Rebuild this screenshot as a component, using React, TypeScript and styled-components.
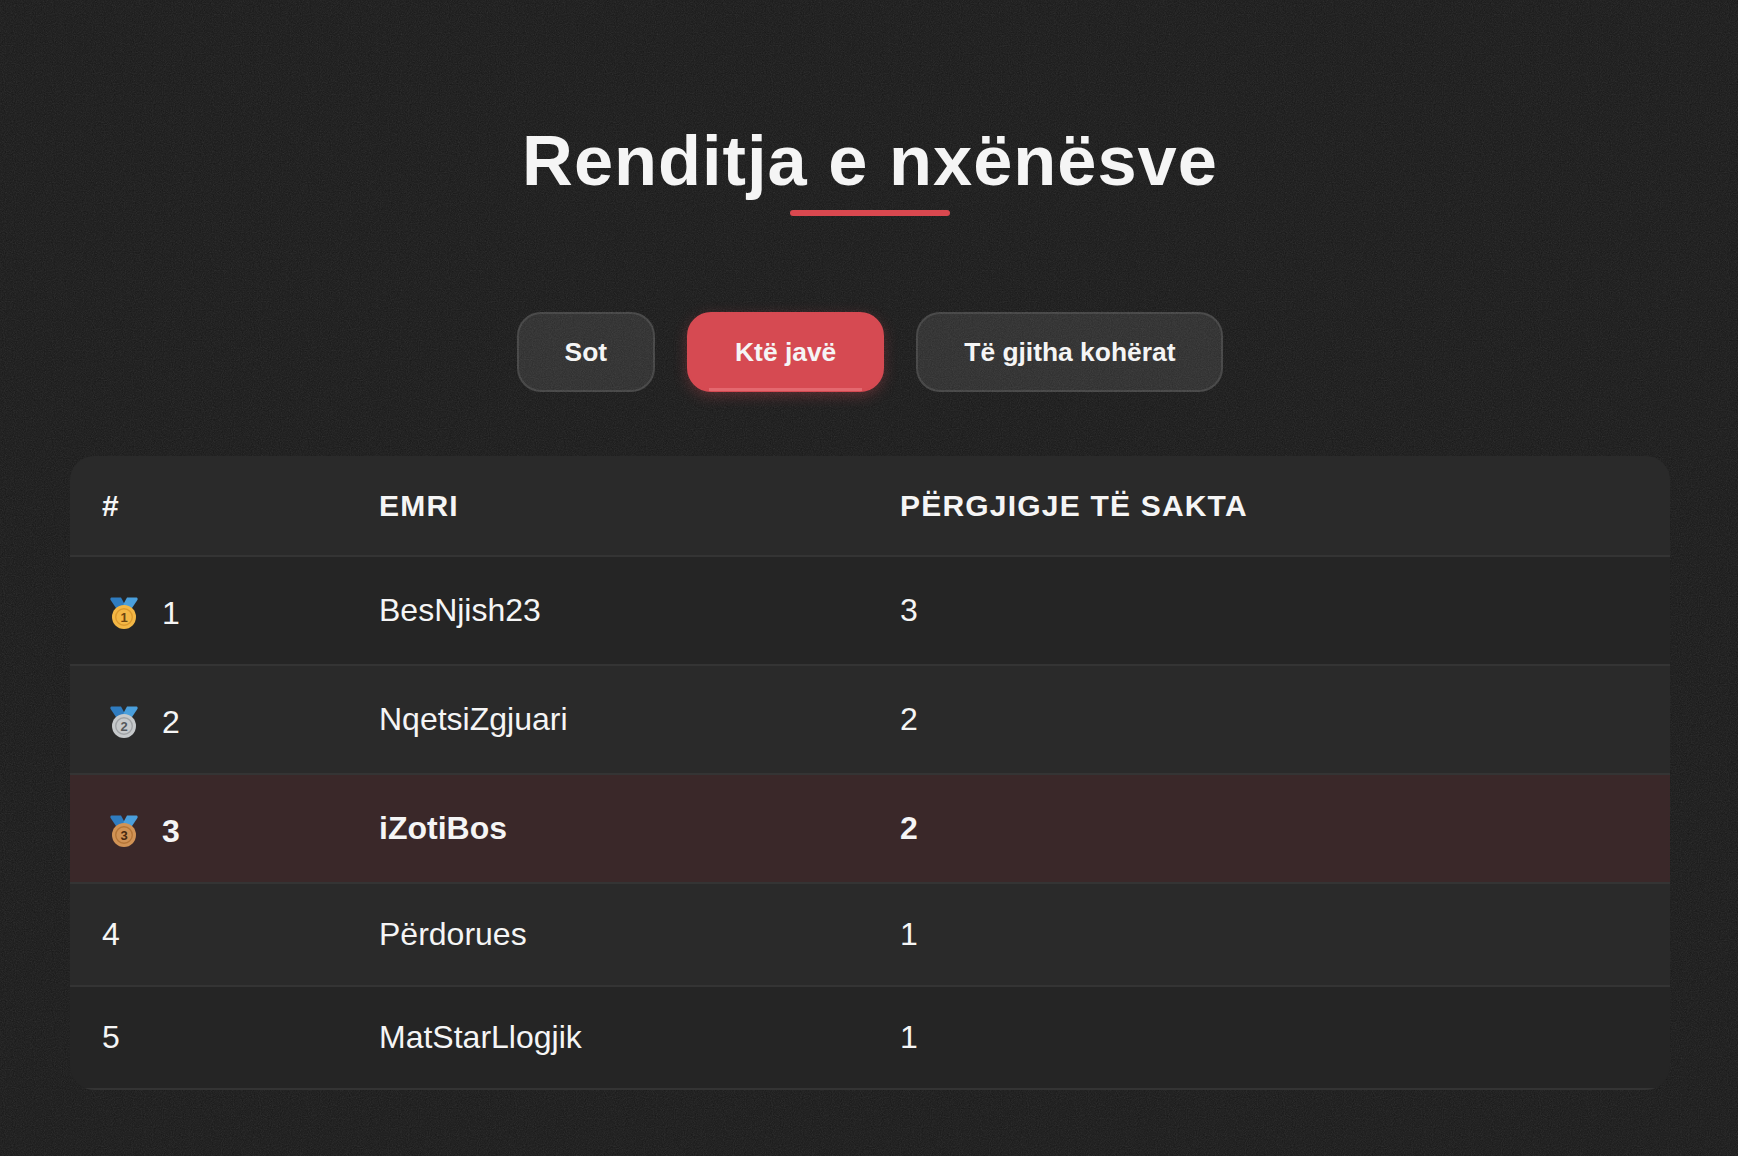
import styled, { createGlobalStyle } from 'styled-components';

const noise = `url("data:image/svg+xml,%3Csvg xmlns='http://www.w3.org/2000/svg' width='256' height='256'%3E%3Cfilter id='n'%3E%3CfeTurbulence type='fractalNoise' baseFrequency='0.9' numOctaves='4' stitchTiles='stitch'/%3E%3CfeColorMatrix type='saturate' values='0'/%3E%3C/filter%3E%3Crect width='256' height='256' filter='url(%23n)' opacity='0.14'/%3E%3C/svg%3E")`;

const GlobalStyle = createGlobalStyle`
  html, body {
    margin: 0;
    padding: 0;
  }

  body {
    background-color: #171717;
    background-image: ${noise};
    color: #f5f5f5;
    font-family: 'Liberation Sans', Arial, sans-serif;
  }
`;

type Period = { label: string; active?: boolean };

type Player = {
  rank: number;
  name: string;
  score: number;
  current?: boolean;
};

const periods: Period[] = [
  { label: 'Sot' },
  { label: 'Ktë javë', active: true },
  { label: 'Të gjitha kohërat' },
];

const players: Player[] = [
  { rank: 1, name: 'BesNjish23', score: 3 },
  { rank: 2, name: 'NqetsiZgjuari', score: 2 },
  { rank: 3, name: 'iZotiBos', score: 2, current: true },
  { rank: 4, name: 'Përdorues', score: 1 },
  { rank: 5, name: 'MatStarLlogjik', score: 1 },
];

const medalColors: Record<number, { disc: string; ring: string; digit: string }> = {
  1: { disc: '#f3b745', ring: '#dc9a2e', digit: '#6d4510' },
  2: { disc: '#c6c9cb', ring: '#a0a3a6', digit: '#55585b' },
  3: { disc: '#d19355', ring: '#b57638', digit: '#47290f' },
};

function Medal({ rank }: { rank: number }) {
  const c = medalColors[rank];
  return (
    <MedalSvg viewBox="0 0 28 32" aria-hidden="true">
      <path d="M1.500 0.500H11L14.500 7 14 13 8 14 0.600 3C0 2 0.400 0.500 1.500 0.500z" fill="#2f7cc0" />
      <path d="M26.500 0.500H17L13.500 7 14 13 20 14 27.400 3C28 2 27.600 0.500 26.500 0.500z" fill="#4a9fdc" />
      <circle cx="14" cy="20" r="12" fill={c.disc} />
      <circle cx="14" cy="20" r="8.300" fill={c.disc} stroke={c.ring} strokeWidth="1.400" />
      <MedalDigit x="14" y="24.600" fill={c.digit}>
        {rank}
      </MedalDigit>
    </MedalSvg>
  );
}

export default function App() {
  return (
    <>
      <GlobalStyle />
      <Page>
        <Title>Renditja e nxënësve</Title>
        <Filters>
          {periods.map((period) => (
            <FilterButton key={period.label} $active={period.active}>
              {period.label}
            </FilterButton>
          ))}
        </Filters>
        <Card>
          <Board>
            <thead>
              <tr>
                <HeadCell $width={277}>#</HeadCell>
                <HeadCell $width={521}>Emri</HeadCell>
                <HeadCell>Përgjigje të sakta</HeadCell>
              </tr>
            </thead>
            <tbody>
              {players.map((player) => (
                <Row key={player.rank} $current={player.current}>
                  <Cell>
                    {player.rank <= 3 ? (
                      <RankWrap>
                        <Medal rank={player.rank} />
                        <RankNumber>{player.rank}</RankNumber>
                      </RankWrap>
                    ) : (
                      player.rank
                    )}
                  </Cell>
                  <Cell>{player.name}</Cell>
                  <Cell>{player.score}</Cell>
                </Row>
              ))}
            </tbody>
          </Board>
        </Card>
      </Page>
    </>
  );
}

const Page = styled.div`
  box-sizing: border-box;
  width: 1602px;
  min-height: 1156px;
  margin: 0 auto;
  padding: 121px 0 64px 2px;
`;

const Title = styled.h1`
  position: relative;
  margin: 0 0 96px;
  padding-bottom: 15px;
  font-size: 70.400px;
  line-height: 80px;
  font-weight: 700;
  letter-spacing: 1px;
  text-align: center;
  color: #f5f5f5;

  &::after {
    content: '';
    position: absolute;
    left: 50%;
    bottom: 0;
    width: 160px;
    height: 6px;
    margin-left: -80px;
    border-radius: 3px;
    background: #d9484f;
  }
`;

const Filters = styled.div`
  display: flex;
  justify-content: center;
  gap: 32px;
  margin-bottom: 64px;
`;

const FilterButton = styled.button<{ $active?: boolean }>`
  position: relative;
  box-sizing: border-box;
  height: 80px;
  padding: 0 46px;
  border-radius: 24px;
  border: 2px solid ${({ $active }) => ($active ? '#d64a52' : 'rgba(255, 255, 255, 0.1)')};
  background-color: ${({ $active }) => ($active ? '#d64a52' : '#2c2c2c')};
  background-image: ${({ $active }) => ($active ? 'none' : noise)};
  box-shadow: ${({ $active }) => ($active ? '0 4px 14px rgba(214, 74, 82, 0.3)' : 'none')};
  color: #f5f5f5;
  font-family: inherit;
  font-size: 26.400px;
  font-weight: 700;

  &::after {
    content: ${({ $active }) => ($active ? "''" : 'none')};
    position: absolute;
    left: 20px;
    right: 20px;
    bottom: -1px;
    height: 3px;
    background: #e4686f;
  }
`;

const Card = styled.div`
  border-radius: 24px;
  overflow: hidden;
`;

const Board = styled.table`
  width: 100%;
  border-collapse: collapse;
  table-layout: fixed;
`;

const HeadCell = styled.th<{ $width?: number }>`
  width: ${({ $width }) => ($width ? `${$width}px` : 'auto')};
  box-sizing: border-box;
  padding: 32px;
  background: #2a2a2a;
  border-bottom: 2px solid #343434;
  font-size: 30px;
  line-height: 35px;
  font-weight: 700;
  letter-spacing: 1.200px;
  text-align: left;
  text-transform: uppercase;
  color: #f5f5f5;
`;

const Row = styled.tr<{ $current?: boolean }>`
  background: ${({ $current }) => ($current ? '#3a2829' : '#252525')};
  font-weight: ${({ $current }) => ($current ? 700 : 400)};

  &:nth-child(even) {
    background: #2a2a2a;
  }
`;

const Cell = styled.td`
  padding: 32px;
  border-bottom: 2px solid #343434;
  font-size: 32px;
  line-height: 37px;
  color: #f5f5f5;
`;

const RankWrap = styled.span`
  display: flex;
  align-items: flex-end;
  height: 43px;
`;

const MedalSvg = styled.svg`
  flex: none;
  width: 28px;
  height: 32px;
  margin: 0 24px 3px 8px;
`;

const MedalDigit = styled.text`
  font-family: 'Liberation Sans', Arial, sans-serif;
  font-size: 13px;
  font-weight: 700;
  text-anchor: middle;
`;

const RankNumber = styled.span`
  line-height: 37px;
`;
